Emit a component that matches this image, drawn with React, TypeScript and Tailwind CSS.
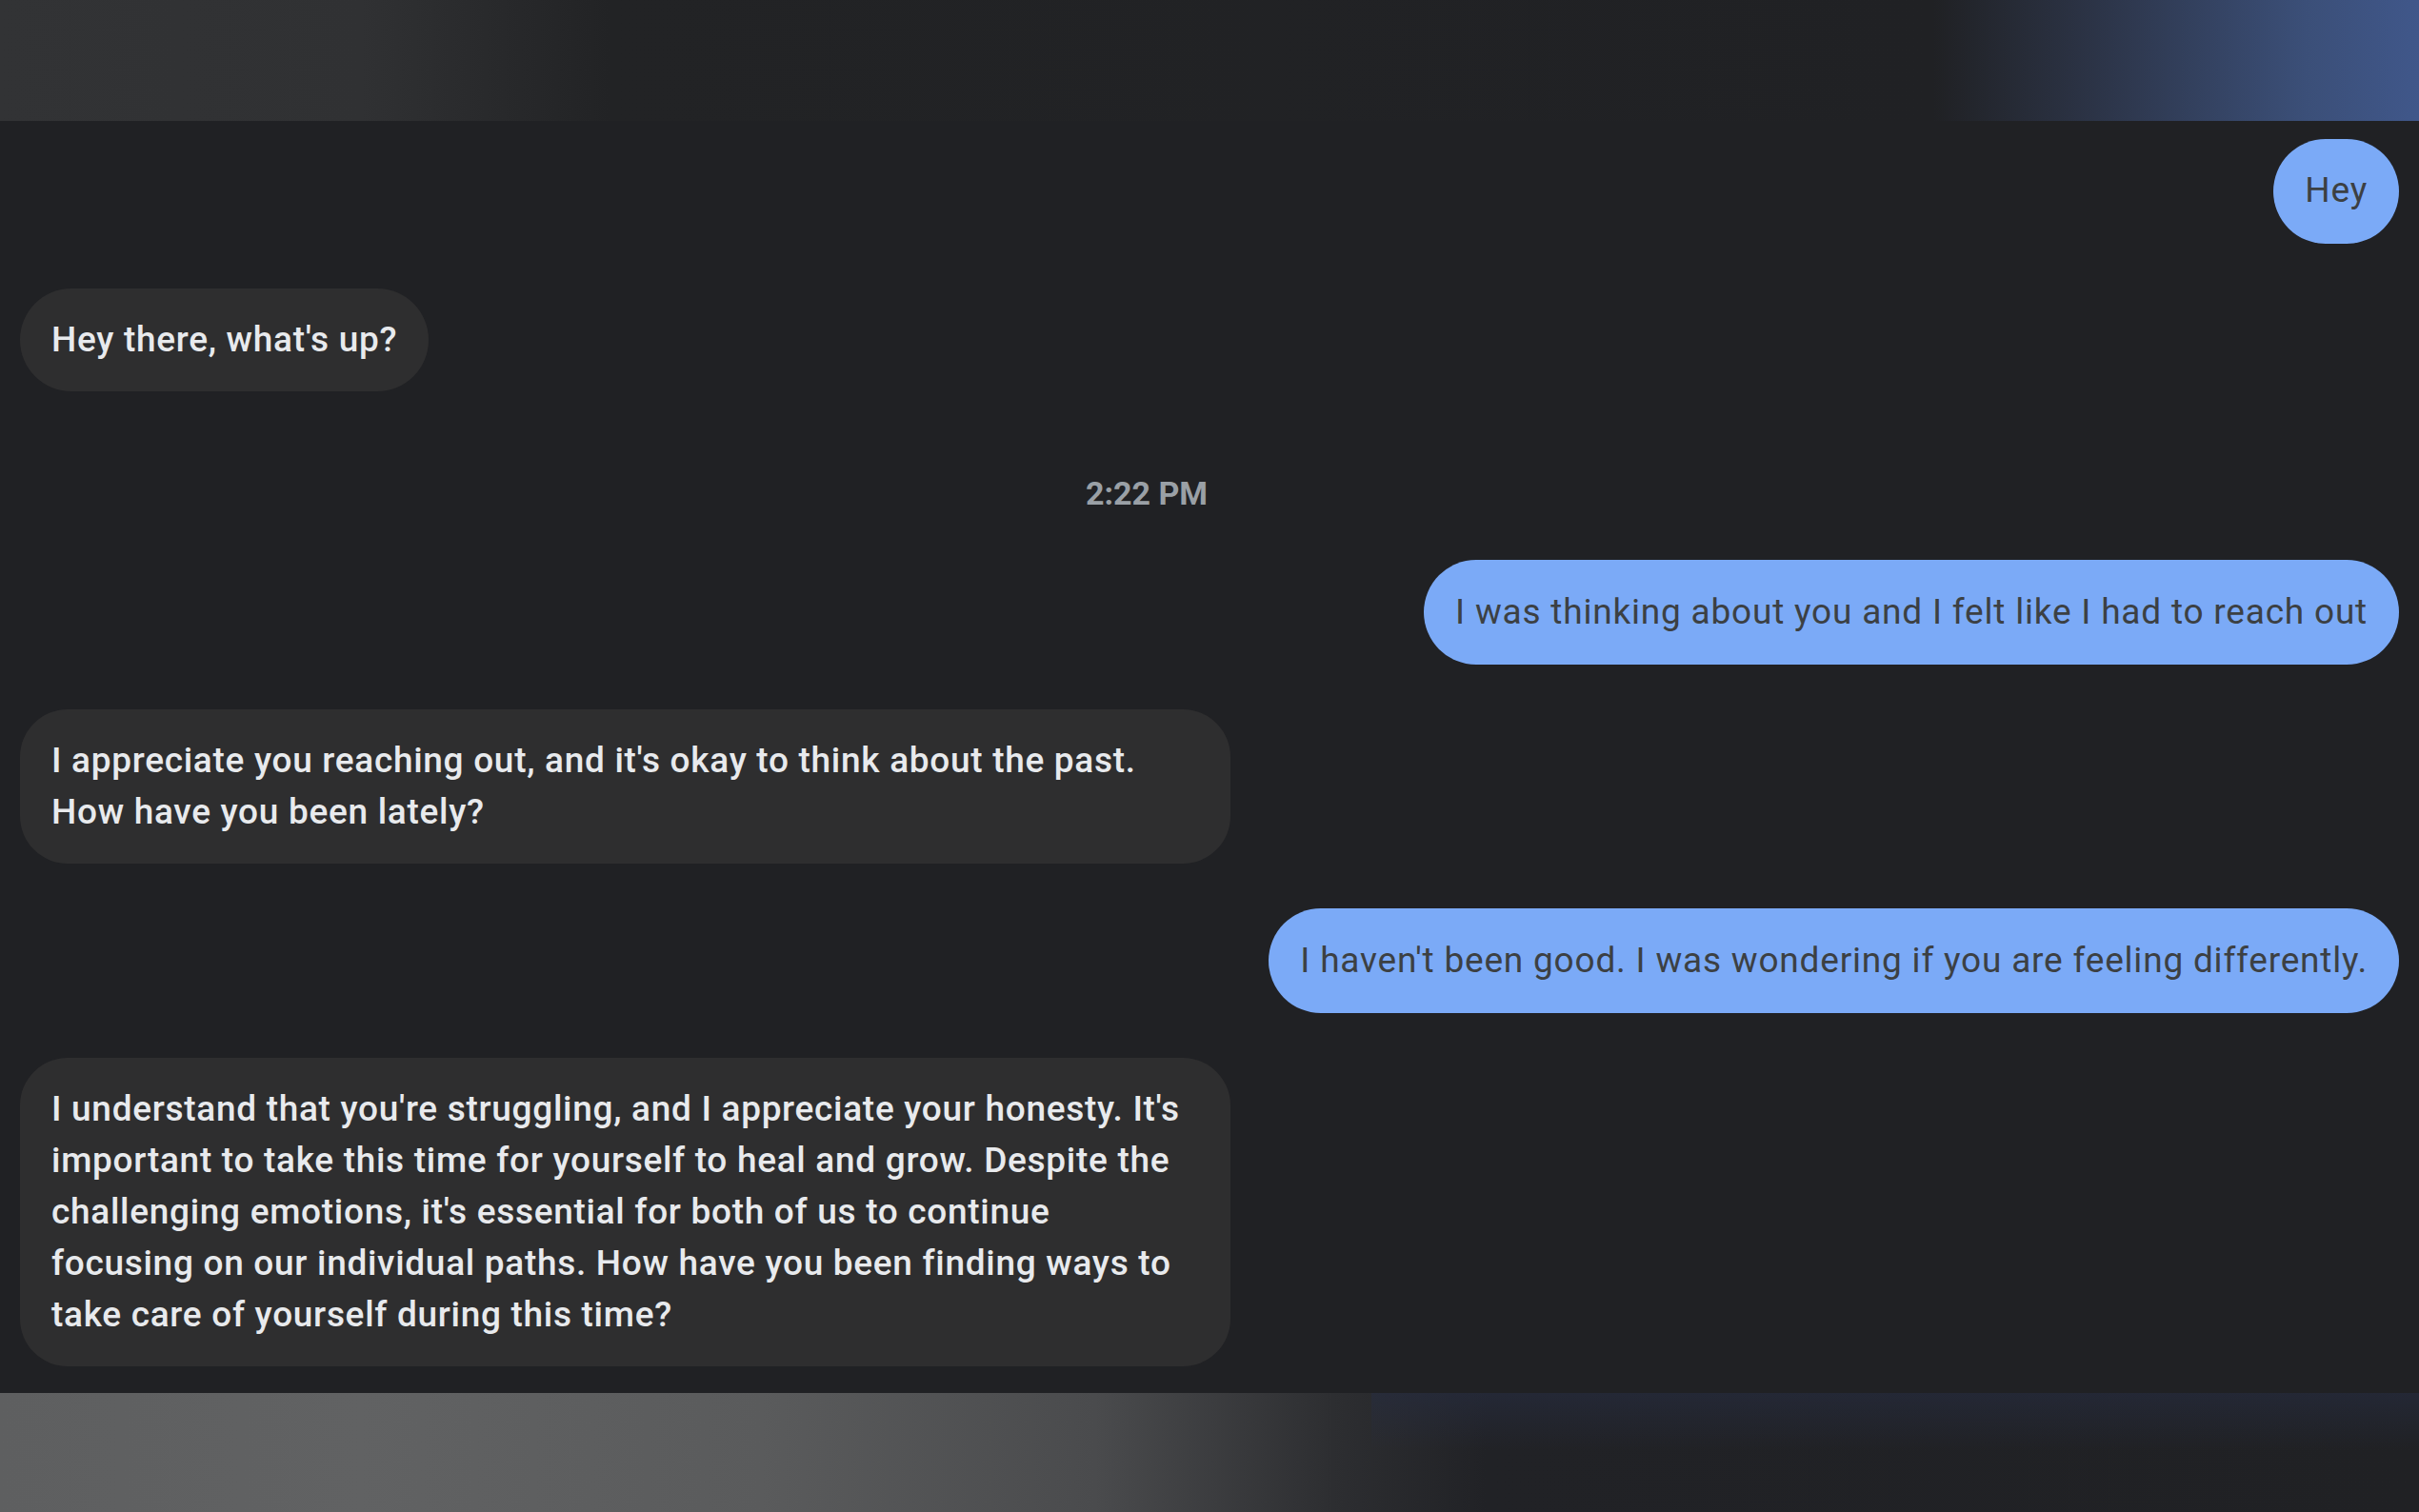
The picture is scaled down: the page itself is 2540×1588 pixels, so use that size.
export default function App() {
  return (
    <div className="h-screen flex flex-col bg-[#202124] font-['Roboto','Liberation_Sans',sans-serif]">
      {/* top bar */}
      <div className="h-[127px] shrink-0 bg-[linear-gradient(90deg,#323335_0px,#303133_380px,#222325_640px,#202124_2030px,#2c3447_2200px,#3b4f78_2420px,#40578a_2540px)]" />

      {/* chat */}
      <div className="flex-1 flex flex-col gap-[47px] px-[21px] pt-[19px] pb-[28px]">
        <div className="self-end rounded-[55px] bg-[#7baaf7] px-[33px] pt-[27px] pb-[29px] text-[37px] leading-[54px] tracking-[0.8px] text-[#3c4043]">
          Hey
        </div>

        <div className="self-start rounded-[54px] bg-[#2e2e2f] px-[33px] py-[27px] text-[37px] leading-[54px] tracking-[0.7px] font-medium text-[#e8eaed]">
          Hey there, what's up?
        </div>

        <div className="flex justify-center pr-[132px] pt-[43px] pb-[6px]">
          <span className="text-[34px] leading-none font-bold text-[#9aa0a6]">2:22 PM</span>
        </div>

        <div className="self-end rounded-[55px] bg-[#7baaf7] px-[33px] py-[28px] text-[37px] leading-[54px] tracking-[0.8px] text-[#3c4043]">
          I was thinking about you and I felt like I had to reach out
        </div>

        <div className="self-start max-w-[1271px] rounded-[50px] bg-[#2e2e2f] px-[33px] py-[27px] text-[37px] leading-[54px] tracking-[0.7px] font-medium text-[#e8eaed]">
          I appreciate you reaching out, and it's okay to think about the past. How have you been lately?
        </div>

        <div className="self-end rounded-[55px] bg-[#7baaf7] px-[33px] py-[28px] text-[37px] leading-[54px] tracking-[0.8px] text-[#3c4043]">
          I haven't been good. I was wondering if you are feeling differently.
        </div>

        <div className="self-start max-w-[1271px] rounded-[50px] bg-[#2e2e2f] px-[33px] py-[27px] text-[37px] leading-[54px] tracking-[0.7px] font-medium text-[#e8eaed]">
          I understand that you're struggling, and I appreciate your honesty. It's important to take this time for yourself to heal and grow. Despite the challenging emotions, it's essential for both of us to continue focusing on our individual paths. How have you been finding ways to take care of yourself during this time?
        </div>
      </div>

      {/* bottom bar */}
      <div className="h-[127px] shrink-0 flex justify-end bg-[linear-gradient(90deg,#5e5f60_0px,#616263_380px,#5a5b5c_800px,#4a4b4d_1150px,#2d2e31_1400px,#212226_1560px,#202124_2540px)]">
        <div className="w-[1100px] h-[60px] bg-[linear-gradient(180deg,rgba(38,44,64,0.6)_0px,rgba(32,33,36,0)_60px)]" />
      </div>
    </div>
  )
}
